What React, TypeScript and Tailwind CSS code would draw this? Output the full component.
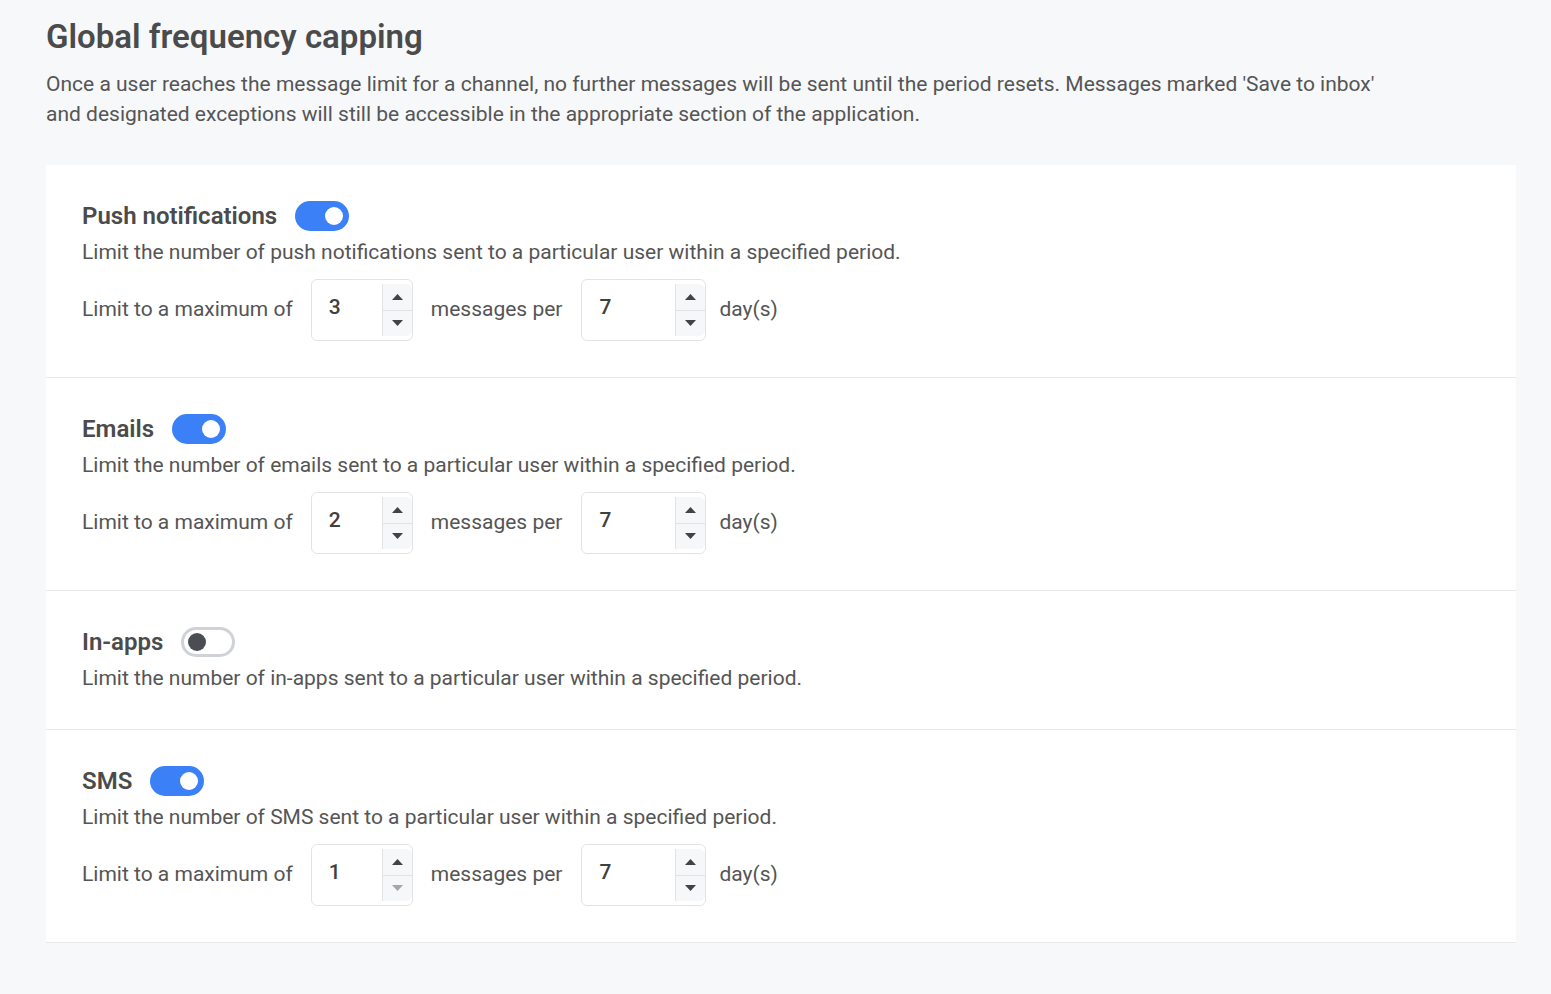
import { FC } from "react";

type Channel = {
  title: string;
  enabled: boolean;
  description: string;
  max?: number;
  days?: number;
};

const channels: Channel[] = [
  {
    title: "Push notifications",
    enabled: true,
    description:
      "Limit the number of push notifications sent to a particular user within a specified period.",
    max: 3,
    days: 7,
  },
  {
    title: "Emails",
    enabled: true,
    description: "Limit the number of emails sent to a particular user within a specified period.",
    max: 2,
    days: 7,
  },
  {
    title: "In-apps",
    enabled: false,
    description: "Limit the number of in-apps sent to a particular user within a specified period.",
  },
  {
    title: "SMS",
    enabled: true,
    description: "Limit the number of SMS sent to a particular user within a specified period.",
    max: 1,
    days: 7,
  },
];

const Toggle: FC<{ on: boolean }> = ({ on }) =>
  on ? (
    <div className="flex items-center justify-end w-[54px] h-[30px] rounded-full bg-[#3b80f6] pr-[6px]">
      <div className="w-[18px] h-[18px] rounded-full bg-white" />
    </div>
  ) : (
    <div className="flex items-center w-[54px] h-[30px] rounded-full bg-white border-[3px] border-[#cfd2d6] pl-[4px]">
      <div className="w-[18px] h-[18px] rounded-full bg-[#4a4d54]" />
    </div>
  );

const Arrow: FC<{ up?: boolean; muted?: boolean }> = ({ up, muted }) => (
  <svg width="13" height="8" viewBox="0 0 13 8">
    <path
      d={up ? "M1 7 L6.5 1 L12 7 Z" : "M1 1 L12 1 L6.5 7 Z"}
      fill={muted ? "#a3a6ab" : "#404348"}
    />
  </svg>
);

const NumberBox: FC<{ value: number; width: string; min?: boolean }> = ({ value, width, min }) => (
  <div className={`flex h-[62px] rounded-md border border-[#e1e3e6] bg-white ${width}`}>
    <div className="flex-1 pl-[17px] pt-[13px] text-[21px] leading-[28px] font-medium text-[#3f3f3f]">
      {value}
    </div>
    <div className="flex flex-col w-[30px] my-[4px] border-l border-[#e1e3e6] bg-[#f6f7f9] rounded-r-md">
      <div className="flex-1 flex items-center justify-center border-b border-[#e1e3e6]">
        <Arrow up />
      </div>
      <div className="flex-1 flex items-center justify-center">
        <Arrow muted={min} />
      </div>
    </div>
  </div>
);

const ChannelSection: FC<{ channel: Channel; last: boolean }> = ({ channel, last }) => (
  <div className={`px-9 py-9 ${last ? "" : "border-b border-[#e8e9eb]"}`}>
    <div className="flex items-center h-[30px]">
      <div className="text-[24px] font-semibold text-[#4b4b4b] leading-[30px]">{channel.title}</div>
      <div className="ml-[18px]">
        <Toggle on={channel.enabled} />
      </div>
    </div>
    <div className="mt-1.5 text-[21px] leading-[30px] text-[#555555]">{channel.description}</div>
    {channel.max !== undefined && (
      <div className="flex items-center mt-3 text-[21px] text-[#555555]">
        <span>Limit to a maximum of</span>
        <div className="ml-[18px]">
          <NumberBox value={channel.max} width="w-[102px]" min={channel.max === 1} />
        </div>
        <span className="ml-[18px]">messages per</span>
        <div className="ml-[19px]">
          <NumberBox value={channel.days ?? 7} width="w-[125px]" />
        </div>
        <span className="ml-[13px]">day(s)</span>
      </div>
    )}
  </div>
);

export default function App() {
  return (
    <div
      className="min-h-screen bg-[#f7f8fa] pl-[46px] pr-[35px] pt-[19px] pb-12"
      style={{ fontFamily: "Roboto, 'Liberation Sans', sans-serif" }}
    >
      <h1 className="text-[33px] leading-[36px] font-semibold text-[#4b4b4b]">
        Global frequency capping
      </h1>
      <p className="mt-[14px] max-w-[1360px] text-[21px] leading-[30px] text-[#555555]">
        Once a user reaches the message limit for a channel, no further messages will be sent until the
        period resets. Messages marked 'Save to inbox' and designated exceptions will still be accessible in
        the appropriate section of the application.
      </p>
      <div className="mt-9 bg-white border-b border-[#e8e9eb]">
        {channels.map((c, i) => (
          <ChannelSection key={c.title} channel={c} last={i === channels.length - 1} />
        ))}
      </div>
    </div>
  );
}
